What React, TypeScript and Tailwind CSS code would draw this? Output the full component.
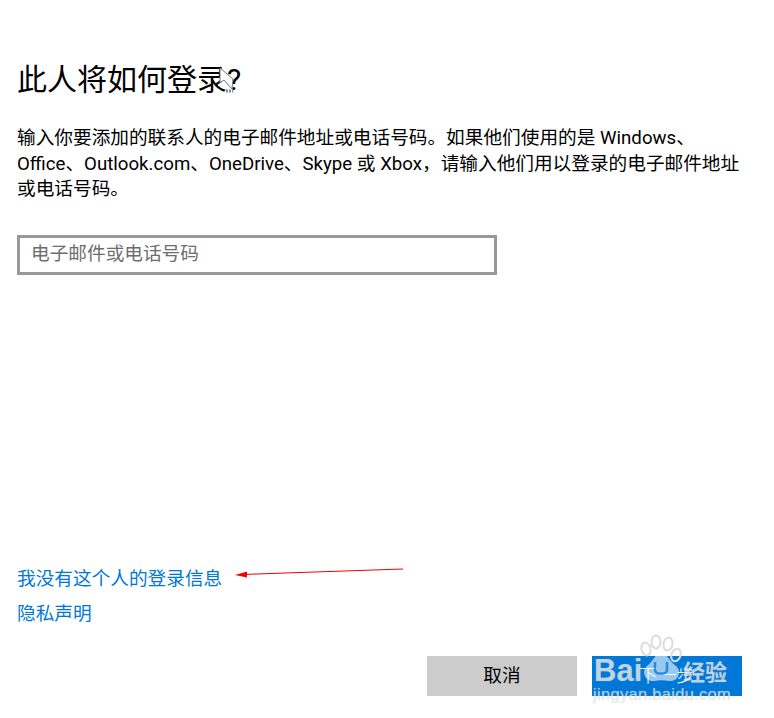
const font = { fontFamily: 'Roboto, "Noto Sans CJK SC", sans-serif' };

export default function App() {
  return (
    <div className="relative flex h-[718px] w-[774px] flex-col overflow-hidden bg-white pl-[17px] text-black" style={font}>
      <h1 className="mt-[60px] h-[40px] text-[30px] leading-[40px] font-normal">此人将如何登录?</h1>
      <p className="mt-[26px] w-[730px] text-[18.67px] leading-[25.5px]">
        输入你要添加的联系人的电子邮件地址或电话号码。如果他们使用的是 Windows、<br />
        Office、Outlook.com、OneDrive、Skype 或 Xbox，请输入他们用以登录的电子邮件地址<br />
        或电话号码。
      </p>
      <div className="mt-[32.5px] flex h-[40px] w-[480px] items-center border-[3px] border-[#999999] pb-[2px] pl-[11px] text-[18.67px] text-[#6d6d6d]">
        电子邮件或电话号码
      </div>
      <a className="mt-[291px] h-[26px] text-[18.67px] leading-[26px] text-[#0078d7]">我没有这个人的登录信息</a>
      <a className="mt-[9px] h-[26px] text-[18.67px] leading-[26px] text-[#0078d7]">隐私声明</a>
      <div className="mt-[29px] flex justify-end gap-[15px] pr-[32px]">
        <button className="h-[40px] w-[150px] bg-[#cccccc] text-[18.67px]">取消</button>
        <button className="h-[40px] w-[150px] bg-[#0078d7] text-[18.67px] font-light text-white">下一步</button>
      </div>

      {/* Red annotation arrow */}
      <svg className="absolute top-[565px] left-[230px]" width="180" height="16" viewBox="0 0 180 16">
        <path d="M12 9.5 L173 4" stroke="#f00000" strokeWidth="1" fill="none" />
        <path d="M5 10 L17 6.5 L17 12.5 Z" fill="#f00000" />
      </svg>

      {/* Mouse pointer */}
      <svg className="absolute top-[66px] left-[218px]" width="18" height="30" viewBox="0 0 18 30">
        <path d="M2 2 L2 17 L6 14 L14 23 L15 13 Z" fill="#ffffff" stroke="#777777" strokeWidth="1" />
        <path d="M8 25 L15 25" stroke="#888888" strokeWidth="3" strokeDasharray="2 1" />
      </svg>

      {/* Baidu Jingyan watermark */}
      <div className="pointer-events-none absolute top-[634px] left-[592px] h-[84px] w-[180px] text-white/60 [text-shadow:0_0_1px_rgba(170,170,170,0.6)]" style={{ fontFamily: '"Liberation Sans", sans-serif' }}>
        <div className="absolute top-[20px] left-[2px] text-[31px] leading-[34px] font-bold">Bai</div>
        <svg className="absolute top-[0px] left-[47px]" width="46" height="50" viewBox="0 0 46 50">
          <g fill="none" stroke="#dcdcdc" strokeWidth="2">
            <ellipse cx="7" cy="15" rx="4.5" ry="6.5" transform="rotate(-15 7 15)" />
            <ellipse cx="17" cy="8" rx="4.5" ry="6.5" />
            <ellipse cx="29" cy="10" rx="4.5" ry="6.5" transform="rotate(10 29 10)" />
            <ellipse cx="37" cy="21" rx="4.5" ry="6.5" transform="rotate(20 37 21)" />
          </g>
          <path d="M22 19 C16 19 15 27 8 32 C2 37 6 48 15 47 C20 46 25 46 30 47 C40 48 43 37 37 32 C30 27 28 19 22 19 Z" fill="#ffffff" fillOpacity="0.6" />
          <path d="M16 28 L16 36 C16 41 28 41 28 36 L28 28" fill="none" stroke="#0078d7" strokeOpacity="0.75" strokeWidth="2.5" />
        </svg>
        <div className="absolute top-[22px] left-[91px] text-[22px] leading-[28px] font-bold" style={{ fontFamily: '"Noto Sans CJK SC", sans-serif' }}>经验</div>
        <div className="absolute top-[50px] left-[1px] text-[16.5px] leading-[20px] tracking-[0.3px]">jingyan.baidu.com</div>
      </div>
    </div>
  );
}
